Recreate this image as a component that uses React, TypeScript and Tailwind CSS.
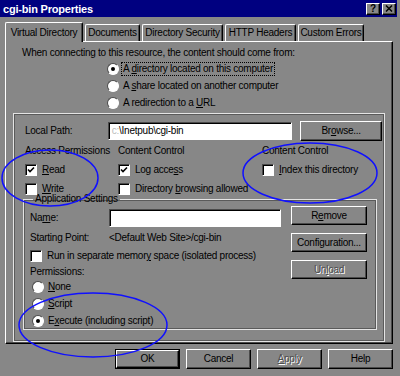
const raised = "border border-t-white border-l-white border-r-black border-b-black shadow-[inset_-1px_-1px_#4a4a4a]";
const sunken = "border border-t-[#4a4a4a] border-l-[#4a4a4a] border-r-white border-b-white shadow-[inset_1px_1px_#000]";

function U({ children }: { children: string }) {
  return <span className="underline underline-offset-[1px]">{children}</span>;
}

function Button({ children, className = "", disabled = false }: { children: React.ReactNode; className?: string; disabled?: boolean }) {
  return (
    <div
      className={`${raised} flex items-center justify-center ${disabled ? "text-[#4e4e4e] [text-shadow:1px_1px_0_#fff]" : "text-black"} ${className}`}
    >
      {children}
    </div>
  );
}

function Check({ checked = false, label }: { checked?: boolean; label: React.ReactNode }) {
  return (
    <div className="flex items-center gap-[5px]">
      <div className={`${sunken} w-[12px] h-[12px] bg-white flex items-center justify-center`}>
        {checked && (
          <svg width="8" height="8" viewBox="0 0 8 8">
            <path d="M1 3.5 L3 5.5 L7 1.5" stroke="#000" strokeWidth="1.6" fill="none" />
          </svg>
        )}
      </div>
      <span>{label}</span>
    </div>
  );
}

function Radio({ checked = false, label, focus = false }: { checked?: boolean; label: React.ReactNode; focus?: boolean }) {
  return (
    <div className="flex items-center gap-[3px]">
      <div className="w-[12px] h-[12px] rounded-full bg-white border border-t-[#4a4a4a] border-l-[#4a4a4a] border-r-white border-b-white flex items-center justify-center">
        {checked && <div className="w-[4px] h-[4px] rounded-full bg-black" />}
      </div>
      <span className={focus ? "outline outline-1 outline-dotted outline-black px-[1px]" : "px-[1px]"}>{label}</span>
    </div>
  );
}

function Tab({ label, w, active = false }: { label: string; w: string; active?: boolean }) {
  return (
    <div
      className={`${w} ${active ? "h-[20px] -mb-[1px] z-10" : "h-[17px]"} flex items-center justify-center border-t border-l border-t-white border-l-white border-r border-r-black shadow-[inset_-1px_0_#4a4a4a] rounded-t-[2px] bg-[#878787]`}
    >
      {label}
    </div>
  );
}

export default function App() {
  return (
    <div
      className="relative w-[400px] h-[376px] bg-[#878787] text-black text-[10px] tracking-[-0.25px] leading-[12px] whitespace-nowrap overflow-hidden"
      style={{ fontFamily: '"Liberation Sans", Arial, sans-serif' }}
    >
      {/* title bar */}
      <div className="h-[17px] mr-[3px] bg-[#000080] flex items-center justify-between pl-[3px] pr-[1px]">
        <span className="text-white font-bold text-[11px] tracking-[-0.2px]">cgi-bin Properties</span>
        <div className="flex gap-[2px]">
          <div className={`${raised} w-[14px] h-[12px] bg-[#878787] flex items-center justify-center font-bold text-[10px]`}>?</div>
          <div className={`${raised} w-[14px] h-[12px] bg-[#878787] flex items-center justify-center`}>
            <svg width="8" height="7" viewBox="0 0 8 7">
              <path d="M1 0.5 L7 6.5 M7 0.5 L1 6.5" stroke="#000" strokeWidth="1.5" />
            </svg>
          </div>
        </div>
      </div>

      {/* tabs */}
      <div className="flex items-end gap-[2px] pl-[5px] mt-[5px] h-[19px]">
        <Tab label="Virtual Directory" w="w-[78px]" active />
        <Tab label="Documents" w="w-[55px]" />
        <Tab label="Directory Security" w="w-[81px]" />
        <Tab label="HTTP Headers" w="w-[71px]" />
        <Tab label="Custom Errors" w="w-[66px]" />
      </div>

      {/* panel */}
      <div className={`${raised} ml-[5px] w-[388px] h-[303px] flex flex-col`}>
        <div className="pl-[16px] mt-[5px] h-[12px]">When connecting to this resource, the content should come from:</div>
        <div className="pl-[101px] mt-[1px] flex flex-col">
          <div className="h-[17px] flex items-center">
            <Radio checked focus label={<>A <U>d</U>irectory located on this computer</>} />
          </div>
          <div className="h-[17px] flex items-center">
            <Radio label={<>A <U>s</U>hare located on another computer</>} />
          </div>
          <div className="h-[17px] flex items-center">
            <Radio label={<>A redirection to a <U>U</U>RL</>} />
          </div>
        </div>

        {/* outer group */}
        <div className="ml-[7px] mt-[2px] w-[372px] h-[229px] border border-[#e4e4e4] shadow-[inset_0_0_0_1px_#5a5a5a] p-[2px] flex flex-col">
          <div className="flex items-center h-[20px] mt-[5px] pl-[9px]">
            <span className="w-[83px]">Local Path:</span>
            <div className={`${sunken} w-[185px] h-[18px] bg-white flex items-center pl-[3px]`}>
              <span className="text-[#bbb]">c:</span>\Inetpub\cgi-bin
            </div>
            <Button className="ml-[8px] w-[82px] h-[20px]">Br<U>o</U>wse...</Button>
          </div>

          <div className="flex pl-[9px] mt-[4px]">
            <div className="w-[93px] flex flex-col">
              <div className="h-[12px]">Access Permissions</div>
              <div className="h-[19px] mt-[3px] flex items-center"><Check checked label={<><U>R</U>ead</>} /></div>
              <div className="h-[19px] flex items-center"><Check label={<><U>W</U>rite</>} /></div>
            </div>
            <div className="w-[144px] flex flex-col">
              <div className="h-[12px]">Content Control</div>
              <div className="h-[19px] mt-[3px] flex items-center"><Check checked label={<>Log acce<U>s</U>s</>} /></div>
              <div className="h-[19px] flex items-center"><Check label={<>Directory <U>b</U>rowsing allowed</>} /></div>
            </div>
            <div className="flex flex-col">
              <div className="h-[12px]">Content Control</div>
              <div className="h-[19px] mt-[3px] flex items-center"><Check label={<><U>I</U>ndex this directory</>} /></div>
            </div>
          </div>

          {/* application settings */}
          <fieldset className="ml-[7px] -mt-[5px] w-[354px] h-[137px] border border-[#e4e4e4] shadow-[inset_0_0_0_1px_#5a5a5a] pl-[6px] pr-[8px]">
            <legend className="ml-[3px] px-[2px] leading-[12px]">Application Settings</legend>
            <div className="flex gap-[9px]">
              <div className="w-[252px] flex flex-col">
                <div className="flex items-center h-[19px] mt-[3px]">
                  <span className="w-[79px]">Na<U>m</U>e:</span>
                  <div className={`${sunken} w-[172px] h-[18px] bg-white`} />
                </div>
                <div className="flex items-center h-[12px] mt-[5px]">
                  <span className="w-[79px]">Starting Point:</span>
                  <span>&lt;Default Web Site&gt;/cgi-bin</span>
                </div>
                <div className="h-[18px] mt-[3px] flex items-center">
                  <Check label={<>Run in separate memor<U>y</U> space (isolated process)</>} />
                </div>
                <div className="h-[12px] mt-[1px]">Permissions:</div>
                <div className="pl-[2px] flex flex-col">
                  <div className="h-[17px] flex items-center"><Radio label={<><U>N</U>one</>} /></div>
                  <div className="h-[17px] flex items-center"><Radio label={<><U>S</U>cript</>} /></div>
                  <div className="h-[17px] flex items-center"><Radio checked label={<>E<U>x</U>ecute (including script)</>} /></div>
                </div>
              </div>
              <div className="flex flex-col gap-[8px] mt-[1px]">
                <Button className="w-[76px] h-[19px]">R<U>e</U>move</Button>
                <Button className="w-[76px] h-[19px]">Configuration...</Button>
                <Button disabled className="w-[76px] h-[19px]">Un<U>l</U>oad</Button>
              </div>
            </div>
          </fieldset>
        </div>
      </div>

      {/* bottom buttons */}
      <div className="flex justify-end gap-[6px] pr-[7px] mt-[5px]">
        <div className="border border-black">
          <Button className="w-[63px] h-[18px]">OK</Button>
        </div>
        <Button className="w-[65px] h-[20px]">Cancel</Button>
        <Button disabled className="w-[65px] h-[20px]"><U>A</U>pply</Button>
        <Button className="w-[65px] h-[20px]">Help</Button>
      </div>

      {/* blue annotation ellipses */}
      <svg className="absolute inset-0 pointer-events-none" width="400" height="376">
        <ellipse cx="50" cy="178" rx="48" ry="28" fill="none" stroke="#1010ff" strokeWidth="1.5" />
        <ellipse cx="310" cy="173" rx="67" ry="30" fill="none" stroke="#1010ff" strokeWidth="1.5" />
        <ellipse cx="93" cy="325" rx="74" ry="32" fill="none" stroke="#1010ff" strokeWidth="1.5" />
      </svg>
    </div>
  );
}
